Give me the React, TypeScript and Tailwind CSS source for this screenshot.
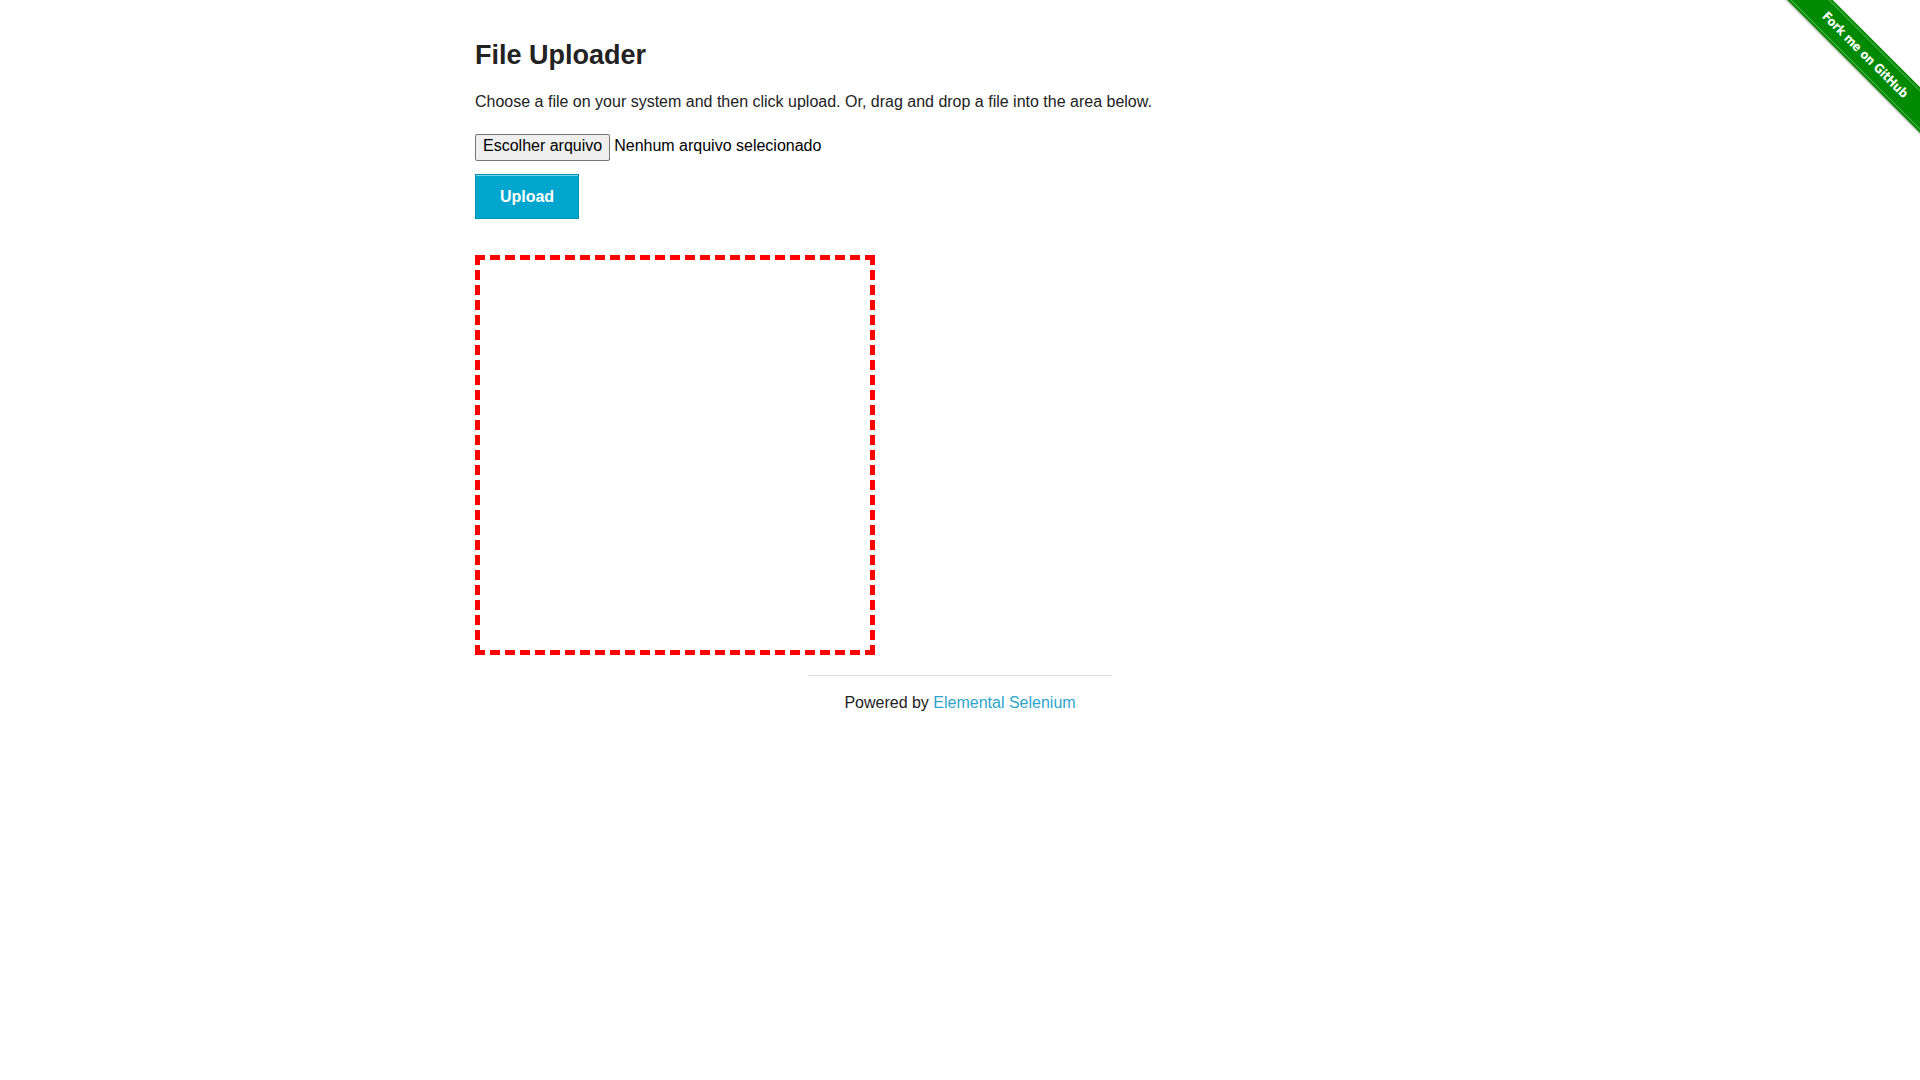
import React from "react";

export default function App() {
  return (
    <div className="relative min-h-[1080px] w-full bg-white font-['Liberation_Sans',Arial,sans-serif] text-[#222]">
      {/* GitHub ribbon */}
      <a className="absolute right-0 top-0 block h-[149px] w-[149px] overflow-hidden" href="#">
        <div className="absolute left-[-16.5px] top-[39px] flex h-[32px] w-[220px] rotate-45 items-center justify-center bg-[#008a00] shadow-[0_1px_2px_rgba(0,0,0,0.35)]">
          <div className="absolute inset-x-0 top-[2px] border-t border-[rgba(255,255,255,0.35)]" />
          <div className="absolute inset-x-0 bottom-[2px] border-t border-[rgba(255,255,255,0.35)]" />
          <span className="font-['DejaVu_Sans_Condensed','DejaVu_Sans',sans-serif] text-[12.5px] font-semibold tracking-[-0.2px] text-white">
            Fork me on GitHub
          </span>
        </div>
      </a>

      <div className="mx-auto w-[1000px] px-[15px]">
        <h3 className="pt-[36px] text-[27px] font-bold leading-[38px]">File Uploader</h3>
        <p className="mt-[15px] text-[16px] leading-[26px]">
          Choose a file on your system and then click upload. Or, drag and drop a file into the area below.
        </p>
        <div className="mt-[19px] flex h-[27px] items-start text-[16px]">
          <span className="box-border h-[27px] rounded-[2px] border border-[#767676] bg-[#efefef] px-[7px] pt-[2px] leading-[18px] text-black">
            Escolher arquivo
          </span>
          <span className="ml-[4px] pt-[3px] leading-[18px] text-black">Nenhum arquivo selecionado</span>
        </div>
        <button className="mt-[13px] box-border block h-[45px] w-[104px] border border-[#0091b5] bg-[#00a6ce] text-[16px] font-bold text-white shadow-[inset_0_1px_0_rgba(255,255,255,0.5)]">
          Upload
        </button>
        <div className="mt-[36px] box-border h-[400px] w-[400px] border-[5px] border-dashed border-[#ff0000]" />
      </div>

      <div className="mx-auto mt-[20px] w-[304px]">
        <div className="border-t border-[#dddddd]" />
        <div className="mt-[14px] text-center text-[16px] leading-[26px]">
          Powered by <a className="text-[#2ba6cb]" href="#">Elemental Selenium</a>
        </div>
      </div>
    </div>
  );
}
